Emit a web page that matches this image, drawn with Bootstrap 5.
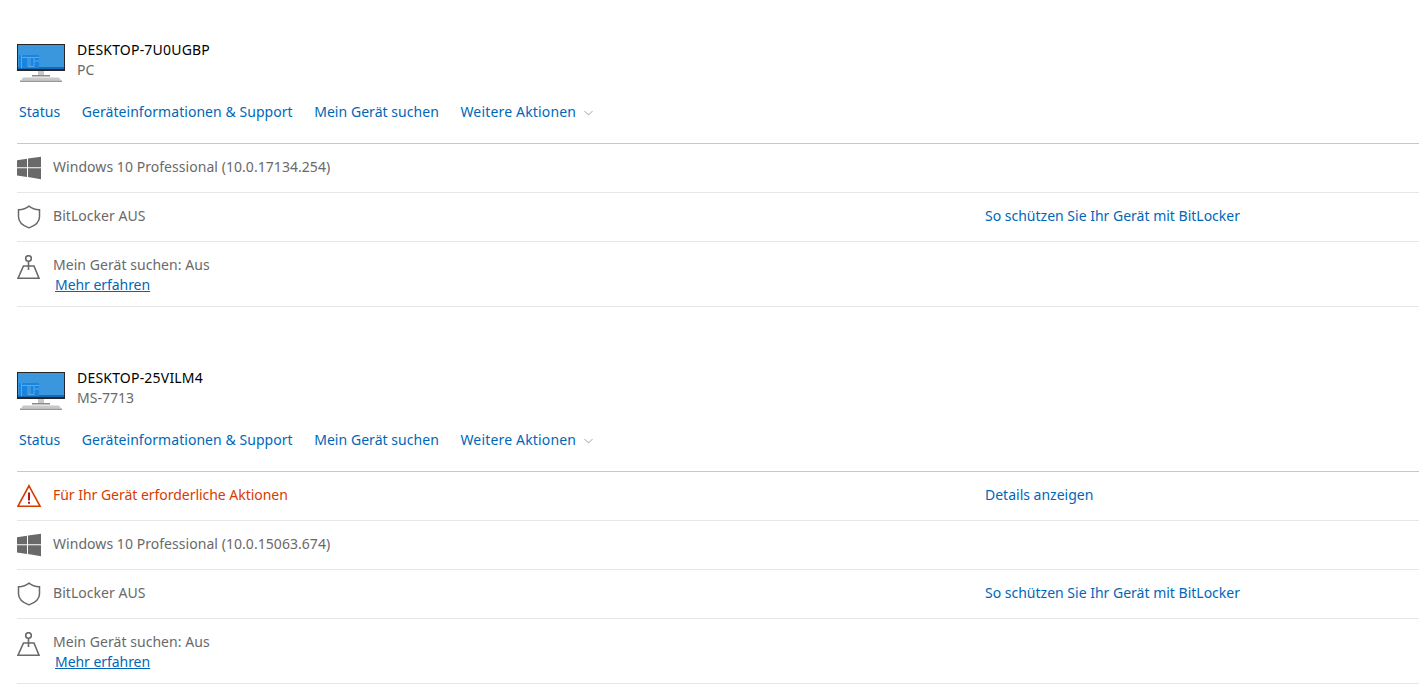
<!DOCTYPE html>
<html lang="de"><head><meta charset="utf-8"><title>Geräte</title>
<link href="https://cdn.jsdelivr.net/npm/bootstrap@5.3.0/dist/css/bootstrap.min.css" rel="stylesheet">
<style>
html,body{height:691px;overflow:hidden}
body{font-family:"Noto Sans","Open Sans",sans-serif;font-size:14px;line-height:20px;color:#696969;background:#fff}
.dev-list{padding:40px 0 0 17px}
.dev-block{margin-bottom:61px}
.dev-block:last-child{margin-bottom:0}
.dev-head{height:40px;gap:12px}
.dev-head svg{margin-top:4px;align-self:flex-start}
.dev-name{color:#000;letter-spacing:.2px}
.dev-nav{gap:21.500px;height:63px;padding-left:2px;padding-top:1px;letter-spacing:.05px}
.dev-nav a:last-child{letter-spacing:.17px}
a{color:#0067b8;text-decoration:none}
.dev-nav svg{margin-left:8px;vertical-align:1px}
.dev-row{height:49px;border-top:1px solid #e6e6e6;gap:12px}
.dev-row.first{border-top-color:#c8c8c8}
.dev-row.tall{height:66px;border-bottom:1px solid #e6e6e6;align-items:flex-start!important;padding-top:13px}
.dev-row .ico{width:24px;height:24px;flex:none}
.row-text{width:920px;flex:none;letter-spacing:.05px}
.dev-row:not(.tall) .row-text,.dev-row:not(.tall)>a{margin-bottom:2px}
.warn{color:#d83b01;letter-spacing:-.03px}
.more{margin-left:2px;text-decoration:underline;display:block;letter-spacing:-.05px}
</style></head><body>
<svg width="0" height="0" class="position-absolute">
<defs>
<symbol id="pc" viewBox="0 0 48 38">
<rect x="0" y="0" width="48" height="27" fill="#262626"/><rect x="1" y="1" width="46" height="24" fill="#3a96dd"/><rect x="1" y="23" width="46" height="2" fill="#0f6cbd"/>
<rect x="2" y="11" width="20" height="13" fill="#1b84dc"/><path d="M4.500 11v13M5 13.500h17M11 13.500v9h6v-9M17 17h5M13 13.500v9" stroke="#5aa9e8" fill="none" stroke-width="1"/>
<rect x="21" y="27" width="6" height="4" fill="#c8c8c8"/><rect x="15" y="31" width="18" height="1.500" fill="#8a8a8a"/><path d="M4 36.500l2-3h36l2 3z" fill="#c8c8c8"/><rect x="3" y="36.500" width="42" height="1.500" fill="#9a9a9a"/>
</symbol>
<symbol id="win" viewBox="0 0 24 24"><path fill="#696969" d="M0 4.200l10-1.400v8.400H0zM11 2.600L24 .8v10.400H11zM0 12.300h10v8.600L0 19.500zM11 12.300h13V23.200L11 21.100z"/></symbol>
<symbol id="shield" viewBox="0 0 24 24"><path fill="none" stroke="#696969" stroke-width="1.500" d="M12 1.200c2.800 2.300 6.500 3.600 10.500 3.500v7c0 5.200-4.200 8.900-10.500 11.200C5.700 20.600 1.500 16.900 1.500 11.700v-7C5.500 4.800 9.200 3.500 12 1.200z"/></symbol>
<symbol id="map" viewBox="0 0 24 24"><g fill="none" stroke="#696969" stroke-width="1.600"><circle cx="11.500" cy="3.500" r="2.800"/><path d="M11.500 6.300V15M6.500 11H17l5 12.200H1z"/></g></symbol>
<symbol id="warn" viewBox="0 0 24 24"><path fill="none" stroke="#d83b01" stroke-width="1.600" d="M12 1.800L23 22.200H1z"/><path stroke="#a80000" stroke-width="1.800" d="M12 8.500v8M12 17.800v2"/></symbol>
</defs></svg>
<main class="dev-list">
<section class="dev-block">
<div class="dev-head d-flex align-items-center"><svg width="48" height="38"><use href="#pc"/></svg><div><div class="dev-name">DESKTOP-7U0UGBP</div><div>PC</div></div></div>
<nav class="dev-nav d-flex align-items-center"><a href="#">Status</a><a href="#">Geräteinformationen &amp; Support</a><a href="#">Mein Gerät suchen</a><a href="#">Weitere Aktionen<svg width="9" height="6" viewBox="0 0 9 6"><path d="M.5 1l4 4 4-4" fill="none" stroke="#a0a0a0"/></svg></a></nav>
<div class="dev-row first d-flex align-items-center"><svg class="ico"><use href="#win"/></svg><div class="row-text">Windows 10 Professional (10.0.17134.254)</div></div>
<div class="dev-row d-flex align-items-center"><svg class="ico"><use href="#shield"/></svg><div class="row-text">BitLocker AUS</div><a href="#">So schützen Sie Ihr Gerät mit BitLocker</a></div>
<div class="dev-row tall d-flex align-items-center"><svg class="ico"><use href="#map"/></svg><div class="row-text">Mein Gerät suchen: Aus<a class="more" href="#">Mehr erfahren</a></div></div>
</section>
<section class="dev-block">
<div class="dev-head d-flex align-items-center"><svg width="48" height="38"><use href="#pc"/></svg><div><div class="dev-name">DESKTOP-25VILM4</div><div>MS-7713</div></div></div>
<nav class="dev-nav d-flex align-items-center"><a href="#">Status</a><a href="#">Geräteinformationen &amp; Support</a><a href="#">Mein Gerät suchen</a><a href="#">Weitere Aktionen<svg width="9" height="6" viewBox="0 0 9 6"><path d="M.5 1l4 4 4-4" fill="none" stroke="#a0a0a0"/></svg></a></nav>
<div class="dev-row first d-flex align-items-center"><svg class="ico"><use href="#warn"/></svg><div class="row-text warn">Für Ihr Gerät erforderliche Aktionen</div><a href="#">Details anzeigen</a></div>
<div class="dev-row d-flex align-items-center"><svg class="ico"><use href="#win"/></svg><div class="row-text">Windows 10 Professional (10.0.15063.674)</div></div>
<div class="dev-row d-flex align-items-center"><svg class="ico"><use href="#shield"/></svg><div class="row-text">BitLocker AUS</div><a href="#">So schützen Sie Ihr Gerät mit BitLocker</a></div>
<div class="dev-row tall d-flex align-items-center"><svg class="ico"><use href="#map"/></svg><div class="row-text">Mein Gerät suchen: Aus<a class="more" href="#">Mehr erfahren</a></div></div>
</section>
</main>
<script src="https://cdn.jsdelivr.net/npm/bootstrap@5.3.0/dist/js/bootstrap.bundle.min.js"></script>
</body></html>
